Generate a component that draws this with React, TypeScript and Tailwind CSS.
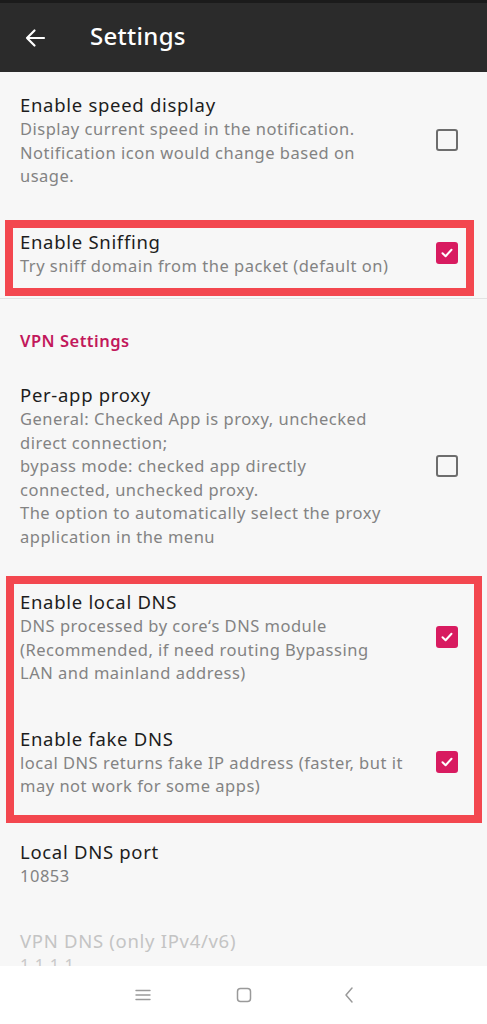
import type { ReactNode } from "react";

const font = { fontFamily: '"Noto Sans", "Open Sans", sans-serif' };

function Checkbox({ checked }: { readonly checked?: boolean }) {
  if (checked) {
    return (
      <div className="w-[22px] h-[22px] rounded-[3px] bg-[#d81b60] flex items-center justify-center shrink-0">
        <svg width="14" height="14" viewBox="0 0 14 14" fill="none">
          <path d="M2.5 7.2 L5.6 10.2 L11.5 3.8" stroke="#fff" strokeWidth="2" strokeLinecap="round" strokeLinejoin="round" />
        </svg>
      </div>
    );
  }
  return <div className="w-[22px] h-[22px] rounded-[3px] border-[2.5px] border-[#6d6d6d] shrink-0" />;
}

interface RowProps {
  readonly title: string;
  readonly lines?: string[];
  readonly checkbox?: "on" | "off";
  readonly faded?: boolean;
}

function Row({ title, lines = [], checkbox, faded }: RowProps) {
  return (
    <div className="flex items-center pl-5 pr-[29px] py-[21px]">
      <div className="flex-1 min-w-0">
        <p
          className={`text-[18.5px] leading-[24px] tracking-[0.7px] whitespace-nowrap ${
            faded ? "text-[#c4c4c4]" : "text-[#1d1d1d]"
          }`}
        >
          {title}
        </p>
        {lines.map((l) => (
          <p
            key={l}
            className={`text-[16.5px] leading-[23.5px] tracking-[0.5px] whitespace-nowrap ${
              faded ? "text-[#c9c9c9]" : "text-[#838383]"
            }`}
          >
            {l}
          </p>
        ))}
      </div>
      {checkbox && <Checkbox checked={checkbox === "on"} />}
    </div>
  );
}

// red annotation frame drawn over the rows it wraps
function Highlight({ children, className }: { readonly children: ReactNode; readonly className: string }) {
  return (
    <div className="relative">
      {children}
      <div className={`absolute border-[8px] border-[#f3474f] pointer-events-none ${className}`} />
    </div>
  );
}

export default function App() {
  return (
    <div className="w-[487px] h-[1024px] flex flex-col bg-[#f7f7f7] overflow-hidden" style={font}>
      <header className="h-[72px] bg-[#2b2b2b] border-t-[3px] border-[#1b1b1b] flex items-center shrink-0">
        <svg className="ml-[24px]" width="22" height="22" viewBox="0 0 22 22" fill="none">
          <path d="M20 11 H3 M10.5 3.5 L3 11 L10.5 18.5" stroke="#fff" strokeWidth="2.2" strokeLinecap="round" strokeLinejoin="round" />
        </svg>
        <h1 className="ml-[44px] text-white text-[24px] font-medium leading-none tracking-[0.3px] -mt-[3px]">Settings</h1>
      </header>

      <main className="flex-1 overflow-hidden">
        <Row
          title="Enable speed display"
          lines={["Display current speed in the notification.", "Notification icon would change based on", "usage."]}
          checkbox="off"
        />
        <Highlight className="top-[11px] bottom-[2px] left-[5px] right-[13px]">
          <Row title="Enable Sniffing" lines={["Try sniff domain from the packet (default on)"]} checkbox="on" />
        </Highlight>
        <div className="h-px bg-[#e2e2e2]" />
        <p className="pl-5 pt-[30px] pb-[9px] text-[16.5px] leading-[24px] tracking-[0.5px] font-semibold text-[#c2185b]">
          VPN Settings
        </p>
        <Row
          title="Per-app proxy"
          lines={[
            "General: Checked App is proxy, unchecked",
            "direct connection;",
            "bypass mode: checked app directly",
            "connected, unchecked proxy.",
            "The option to automatically select the proxy",
            "application in the menu",
          ]}
          checkbox="off"
        />
        <Highlight className="top-[7px] -bottom-[4px] left-[6px] right-[5px]">
          <Row
            title="Enable local DNS"
            lines={["DNS processed by core\u02bbs DNS module", "(Recommended, if need routing Bypassing", "LAN and mainland address)"]}
            checkbox="on"
          />
          <Row
            title="Enable fake DNS"
            lines={["local DNS returns fake IP address (faster, but it", "may not work for some apps)"]}
            checkbox="on"
          />
        </Highlight>
        <Row title="Local DNS port" lines={["10853"]} />
        <Row title="VPN DNS (only IPv4/v6)" lines={["1.1.1.1"]} faded />
      </main>

      <nav className="h-[58px] bg-white shrink-0 flex items-center">
        <svg className="ml-[135px]" width="16" height="12" viewBox="0 0 16 12" fill="none">
          <path d="M1 1.5 H15 M1 6 H15 M1 10.5 H15" stroke="#9a9a9a" strokeWidth="1.4" strokeLinecap="round" />
        </svg>
        <svg className="ml-[85px]" width="16" height="16" viewBox="0 0 16 16" fill="none">
          <rect x="1.5" y="1.5" width="13" height="13" rx="3" stroke="#9a9a9a" strokeWidth="1.5" />
        </svg>
        <svg className="ml-[92px]" width="10" height="18" viewBox="0 0 10 18" fill="none">
          <path d="M8 2 L2 9 L8 16" stroke="#9a9a9a" strokeWidth="1.5" strokeLinecap="round" strokeLinejoin="round" />
        </svg>
      </nav>
    </div>
  );
}
